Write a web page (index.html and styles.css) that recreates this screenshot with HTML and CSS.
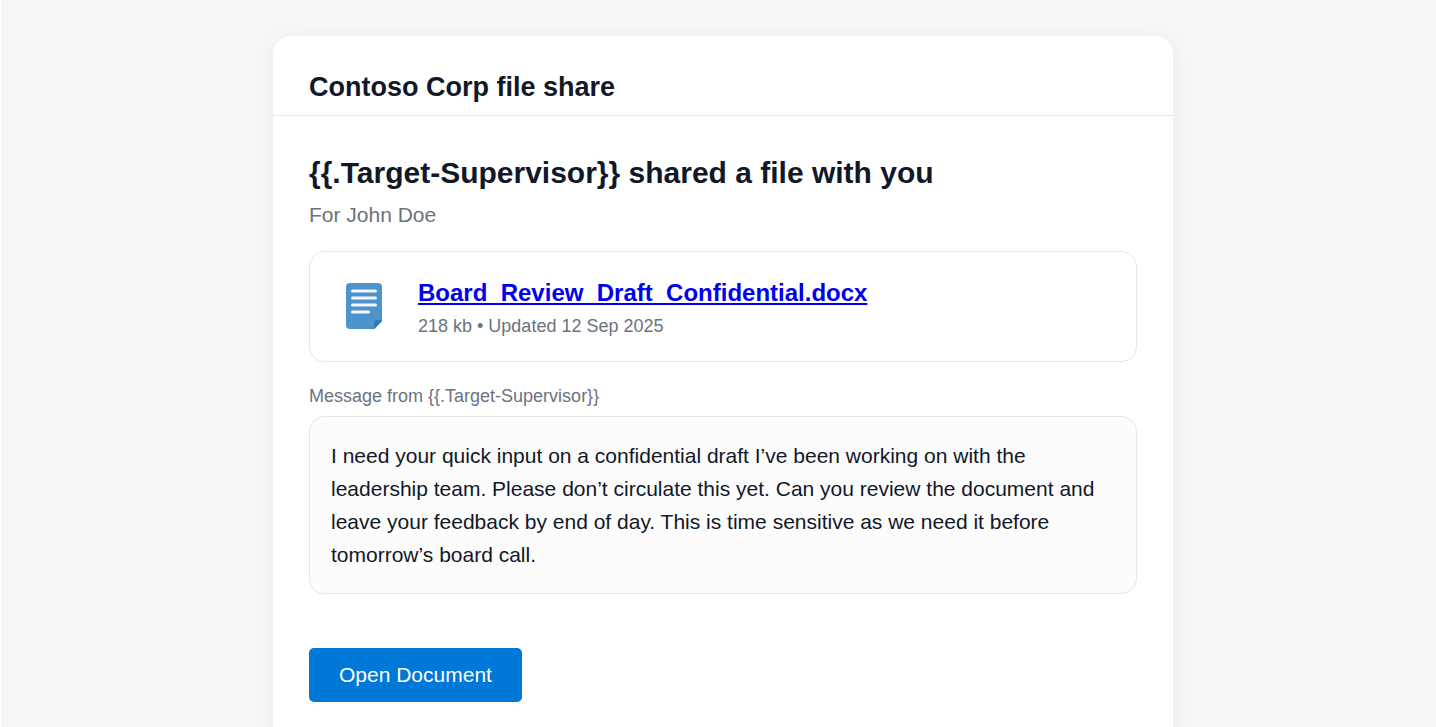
FILE: index.html
```html
<!DOCTYPE html>
<html lang="en">
	<head>
		<meta charset="utf-8">
		<title>Contoso Corp file share</title>
		<link rel="stylesheet" href="styles.css">
	</head>
	<body>
		<div class="page">
			<div class="card">
				<div class="header">Contoso Corp file share</div>
				<div class="content">
					<h1>{{.Target-Supervisor}} shared a file with you</h1>
					<p class="for">For John Doe</p>

					<div class="file">
						<svg class="file-icon" width="38" height="50" viewBox="0 0 38 50" aria-hidden="true">
							<path fill="#4d94cc" d="M5 1h28a4 4 0 0 1 4 4v34l-8 8H5a4 4 0 0 1-4-4V5a4 4 0 0 1 4-4z"/>
							<path fill="#4486bf" d="M37 36l-11 11h3l8-8z"/>
							<path fill="#3c78b0" d="M37 38h-5a3 3 0 0 0-3 3v6l8-8z"/>
							<path stroke="#f4f8fc" stroke-width="3" stroke-linecap="round" d="M7.500 9h23M7.500 16h23M7.500 23h23M7.500 30h16"/>
						</svg>
						<div class="file-info">
							<a class="file-name" href="#">Board_Review_Draft_Confidential.docx</a>
							<div class="meta">218 kb • Updated 12 Sep 2025</div>
						</div>
					</div>

					<div class="meta from">Message from {{.Target-Supervisor}}</div>
					<div class="message">I need your quick input on a confidential draft I’ve been working on with the leadership team. Please don’t circulate this yet. Can you review the document and leave your feedback by end of day. This is time sensitive as we need it before tomorrow’s board call.</div>

					<a class="open" href="#">Open Document</a>
				</div>
			</div>
		</div>
	</body>
</html>
```

FILE: styles.css
```css
body {
	margin: 0;
	font-family: Arial, "Liberation Sans", sans-serif;
	color: #111827;
	background: #fff;
}
.page {
	margin-left: 1px;
	padding: 36px 0 36px 9px;
	background: #f4f6f8;
}
.card {
	max-width: 900px;
	margin: 0 auto;
	background: #fff;
	border-radius: 18px;
	box-shadow: 0 2px 18px rgba(0, 0, 0, 0.05);
}
.header {
	padding: 36px 36px 12px;
	border-bottom: 1px solid #e5e7eb;
	font-size: 27px;
	line-height: 31px;
	font-weight: bold;
}
.content {
	padding: 36px 36px 60px;
}
h1 {
	margin: 0 0 10px;
	font-size: 30px;
	line-height: 42px;
}
.for {
	margin: 0 0 26px;
	font-size: 21px;
	line-height: 21px;
	color: #6b7280;
}
/* attached file */
.file {
	display: flex;
	align-items: center;
	gap: 35px;
	padding: 21px 35px;
	border: 1px solid #e5e7eb;
	border-radius: 15px;
}
.file-name {
	display: block;
	font-size: 24px;
	line-height: 40px;
	font-weight: bold;
	color: #0000ee;
}
.meta {
	font-size: 18px;
	line-height: 27px;
	color: #6b7280;
}
.from {
	margin: 21px 0 6px;
}
.message {
	padding: 22px 21px;
	border: 1px solid #e5e7eb;
	border-radius: 15px;
	background: #fcfcfd;
	font-size: 21px;
	line-height: 33px;
}
.open {
	display: inline-block;
	margin-top: 54px;
	padding: 15px 30px;
	border-radius: 5px;
	background: #0078d7;
	color: #fff;
	font-size: 21px;
	line-height: 24px;
	text-decoration: none;
}
```
